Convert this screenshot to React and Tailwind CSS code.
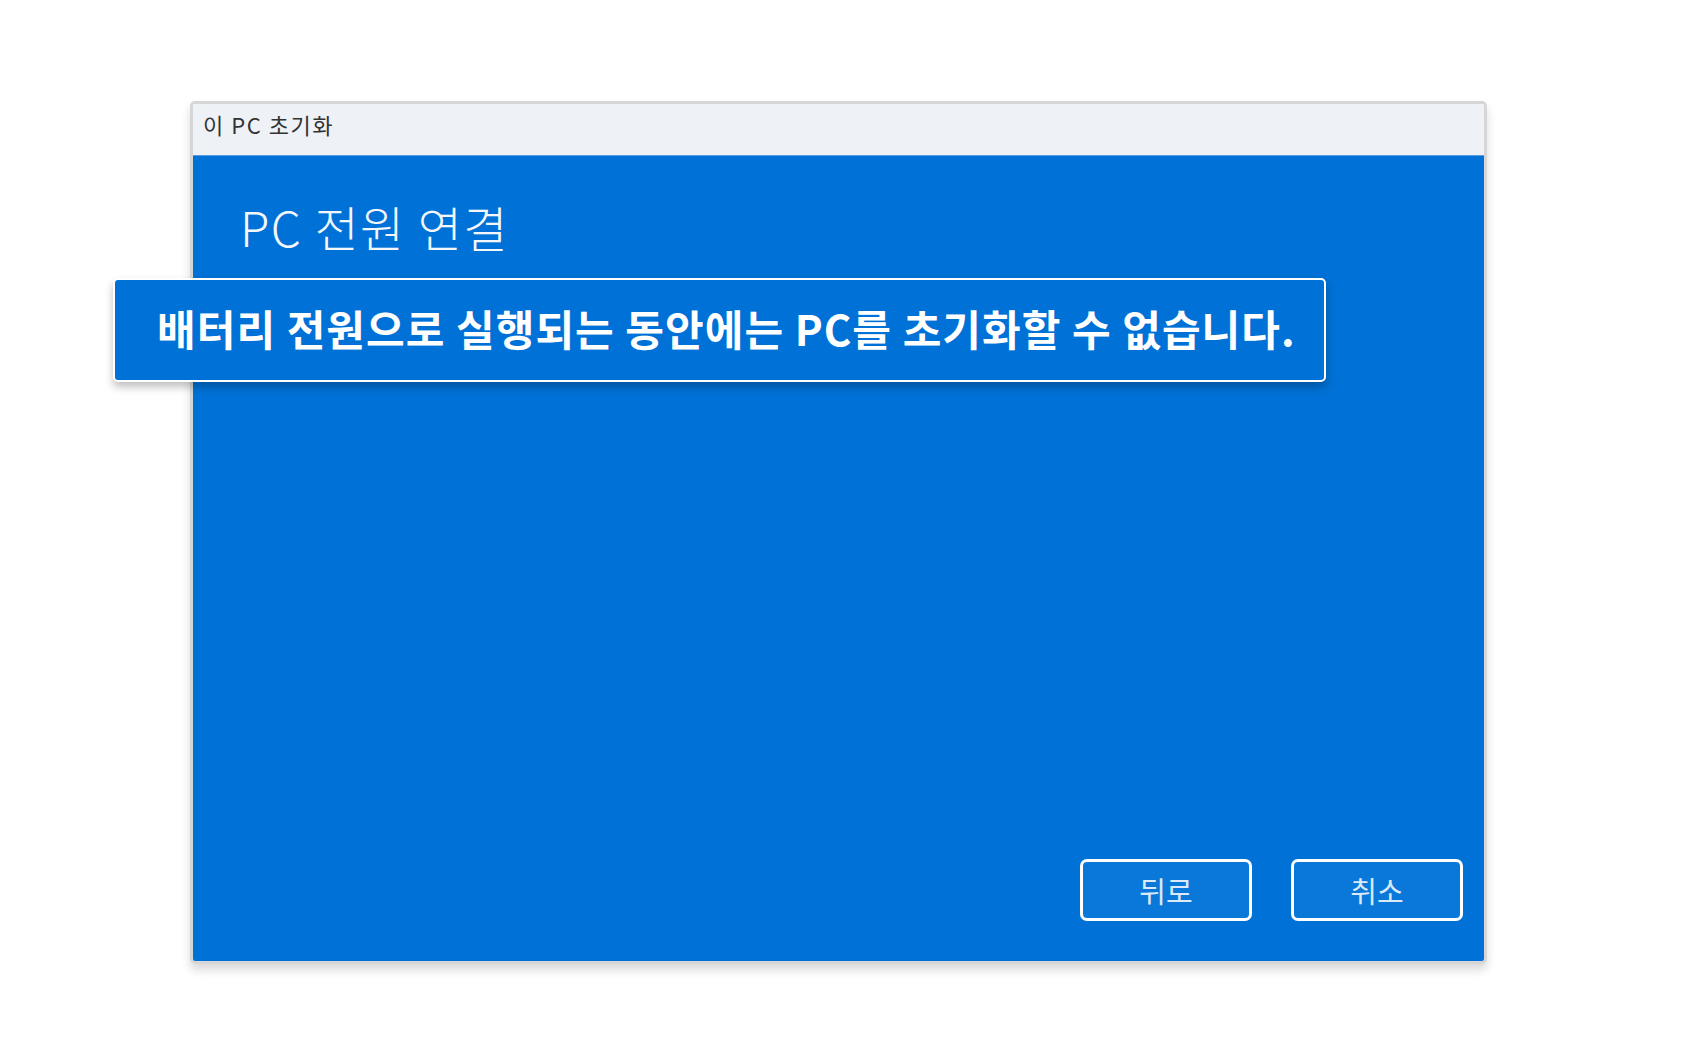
export default function App() {
  return (
    <div
      className="relative w-[1685px] h-[1053px] bg-white overflow-hidden"
      style={{ fontFamily: '"Noto Sans CJK KR", "Noto Sans", sans-serif' }}
    >
      {/* window */}
      <div className="ml-[190px] mt-[101px] w-[1297px] h-[863px] border-[3px] border-[#d6d6d6] rounded-[5px] shadow-[0_6px_10px_rgba(0,0,0,0.15)] flex flex-col overflow-hidden">
        <div className="h-[52px] bg-[#eef2f7] border-b border-[#5a9be0] flex items-start pt-[9px] px-[10px]">
          <span className="text-[22px] tracking-[0.07em] text-[#333] leading-none">이 PC 초기화</span>
        </div>
        <div className="flex-1 bg-[#0071d6] flex flex-col">
          <h1 className="mt-[46px] ml-[47px] text-[48px] font-light tracking-[0.03em] text-[#f4f8fd] leading-none">
            PC 전원 연결
          </h1>
          <div className="mt-auto mb-[40px] mr-[21px] flex justify-end gap-[39px]">
            <button className="w-[172px] h-[62px] border-[3px] border-white rounded-[7px] bg-[#0a78d8] text-[29px] text-[#dbe9f8] leading-none">
              뒤로
            </button>
            <button className="w-[172px] h-[62px] border-[3px] border-white rounded-[7px] bg-[#0a78d8] text-[29px] text-[#dbe9f8] leading-none">
              취소
            </button>
          </div>
        </div>
      </div>

      {/* callout */}
      <div className="absolute left-[113px] top-[278px] w-[1213px] h-[104px] bg-[#0071d6] border-2 border-white rounded-[5px] shadow-[0_5px_8px_rgba(0,0,0,0.25)] flex items-center pl-[42px] pb-[4px]">
        <span className="text-[42px] font-bold tracking-[0.025em] text-white leading-none">
          배터리 전원으로 실행되는 동안에는 PC를 초기화할 수 없습니다.
        </span>
      </div>
    </div>
  );
}
